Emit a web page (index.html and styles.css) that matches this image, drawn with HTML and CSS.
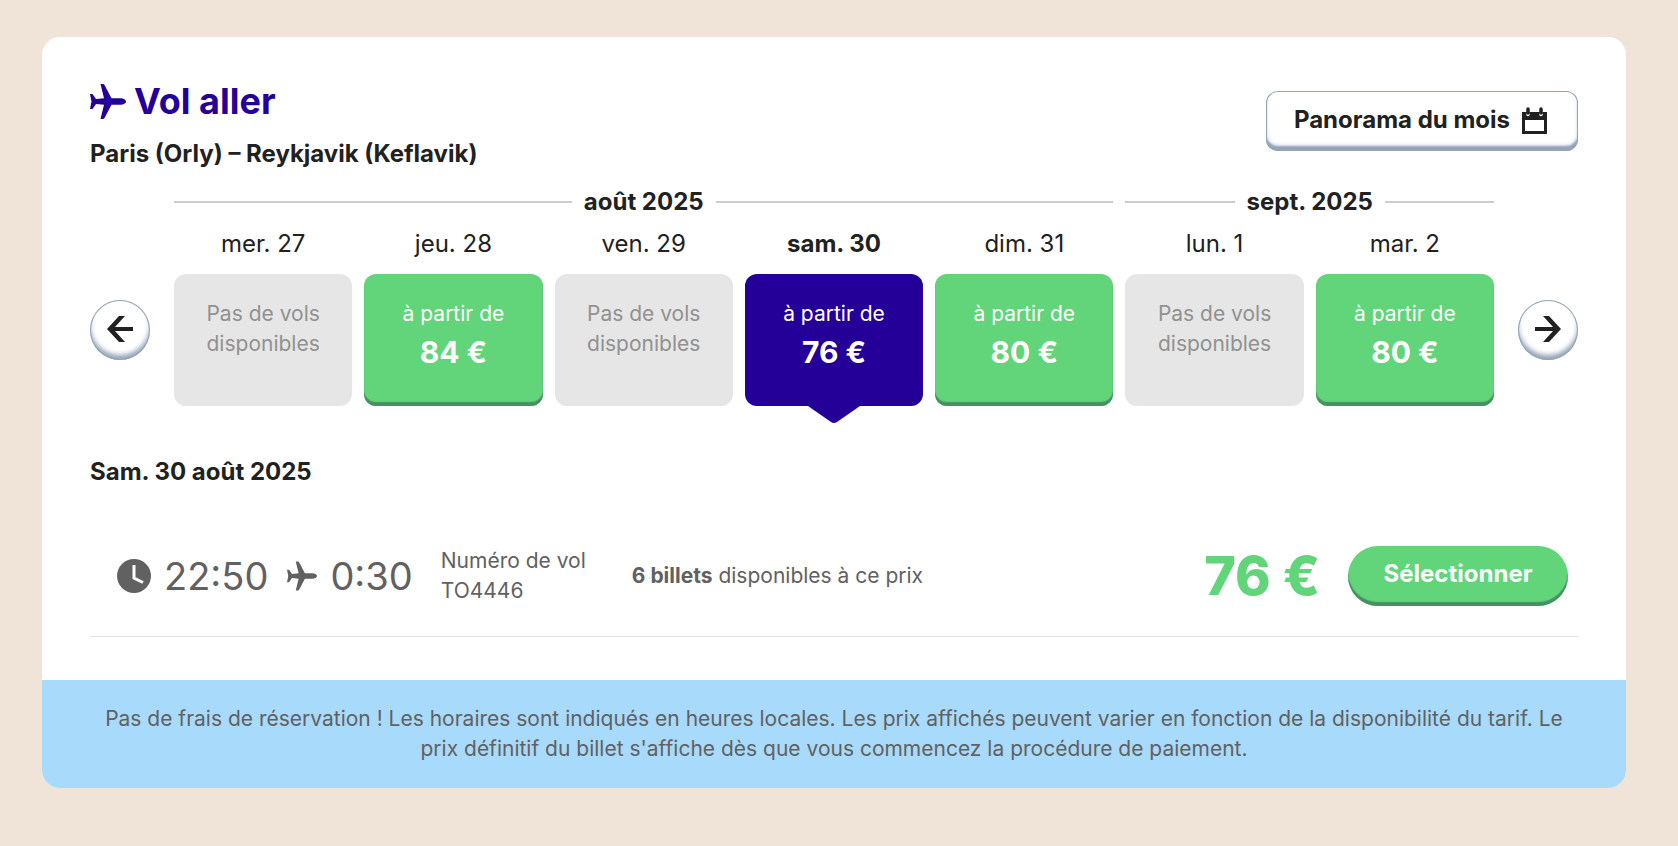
FILE: index.html
```
<!DOCTYPE html>
<html lang="fr">

<head>
  <meta charset="utf-8">
  <title>Vol aller</title>
  <link rel="stylesheet" href="styles.css">
</head>

<body>
  <svg class="sprite" aria-hidden="true">
    <symbol id="plane" viewBox="0 0 36 35">
      <path d="M10.500 0H13q1 0 1.500 1l7 13.200h8.500c3.500 0 6 1.500 6 3.300s-2.500 3.300-6 3.300h-8.500L14.500 34q-.5 1-1.500 1h-2.500l3.500-14.300-8-.7-3.500 5H0l1.500-7.500L0 10h2.500L6 15l8-.7z"/>
    </symbol>
  </svg>

  <main class="card">
    <div class="content">
      <header class="header">
        <div>
          <h1 class="title"><svg class="title-icon"><use href="#plane"/></svg>Vol aller</h1>
          <h2 class="subtitle">Paris (Orly) – Reykjavik (Keflavik)</h2>
        </div>
        <button type="button" class="month-button">
          Panorama du mois
          <svg class="calendar-icon" viewBox="0 0 25 27">
            <path d="M0 5h25v22H0zM3 13v11h19V13z" fill-rule="evenodd"/>
            <path d="M6 7v.500M19 7v.500" stroke="#fff" stroke-width="3.500" stroke-linecap="round"/>
            <path d="M6 2v4M19 2v4" stroke="#212121" stroke-width="3.500" stroke-linecap="round"/>
          </svg>
        </button>
      </header>

      <section class="picker">
        <button type="button" class="arrow" aria-label="Jours précédents">
          <svg class="arrow-icon" viewBox="0 0 26 26"><path d="M26 11v4H8l10 11h-6L0 13 12 0h6L8 11z"/></svg>
        </button>
        <div class="calendar">
          <div class="month month-first">août 2025</div>
          <div class="month month-second">sept. 2025</div>

          <div class="day">mer. 27</div>
          <div class="day">jeu. 28</div>
          <div class="day">ven. 29</div>
          <div class="day day-current">sam. 30</div>
          <div class="day">dim. 31</div>
          <div class="day">lun. 1</div>
          <div class="day">mar. 2</div>

          <button type="button" class="fare fare-none" disabled>Pas de vols disponibles</button>
          <button type="button" class="fare">à partir de <strong class="fare-price">84 €</strong></button>
          <button type="button" class="fare fare-none" disabled>Pas de vols disponibles</button>
          <button type="button" class="fare fare-selected">à partir de <strong class="fare-price">76 €</strong>
            <svg class="pointer" viewBox="0 0 52 17"><path d="M0 0h52L29 16q-3 2-6 0z"/></svg>
          </button>
          <button type="button" class="fare">à partir de <strong class="fare-price">80 €</strong></button>
          <button type="button" class="fare fare-none" disabled>Pas de vols disponibles</button>
          <button type="button" class="fare">à partir de <strong class="fare-price">80 €</strong></button>
        </div>
        <button type="button" class="arrow" aria-label="Jours suivants">
          <svg class="arrow-icon" viewBox="0 0 26 26"><path d="M0 11v4h18L8 26h6l12-13L14 0H8l10 11z"/></svg>
        </button>
      </section>

      <h3 class="date">Sam. 30 août 2025</h3>

      <section class="flight">
        <div class="times">
          <svg class="clock-icon" viewBox="0 0 34 34">
            <circle cx="17" cy="17" r="17"/>
            <path d="M17 6v13l9 4.500" fill="none" stroke="#fff" stroke-width="3"/>
          </svg>
          <span>22:50</span>
          <svg class="flight-icon"><use href="#plane"/></svg>
          <span>0:30</span>
        </div>
        <div class="number">Numéro de vol<br>TO4446</div>
        <div class="tickets"><strong>6 billets</strong> disponibles à ce prix</div>
        <div class="price">76 €</div>
        <button type="button" class="select-button">Sélectionner</button>
      </section>
    </div>

    <footer class="notice">Pas de frais de réservation ! Les horaires sont indiqués en heures locales. Les prix affichés peuvent varier en fonction de la disponibilité du tarif. Le prix définitif du billet s'affiche dès que vous commencez la procédure de paiement.</footer>
  </main>
</body>

</html>
```

FILE: styles.css
```
* {
  box-sizing: border-box;
}

body {
  margin: 0;
  padding: 37px 52px 56px 42px;
  background-color: #f0e4d9;
  color: #212121;
  font-family: Inter, "Open Sans", sans-serif;
  font-size: 21px;
  line-height: 30px;
}

h1, h2, h3 {
  margin: 0;
}

button {
  border: none;
  padding: 0;
  background: none;
  color: inherit;
  font: inherit;
  cursor: pointer;
}

svg {
  display: block;
  flex: none;
  fill: currentColor;
}

.sprite {
  display: none;
}

.card {
  border-radius: 18px;
  background-color: #fff;
  overflow: hidden;
}

.content {
  padding: 43px 48px;
}

.header {
  display: flex;
  justify-content: space-between;
  align-items: flex-start;
  margin-bottom: 18px;
}

.title {
  display: flex;
  align-items: center;
  gap: 8px;
  margin-bottom: 17px;
  color: #240099;
  font-size: 36px;
  line-height: 42px;
}

.title-icon {
  width: 36px;
  height: 35px;
}

.subtitle, .date {
  font-size: 24px;
  line-height: 30px;
}

.month-button {
  display: flex;
  align-items: center;
  gap: 12px;
  height: 60px;
  margin-top: 11px;
  padding: 0 31px 2px 28px;
  border-radius: 12px;
  box-shadow: inset 0 0 0 1px #94a3b8, inset 0 -5px 2px #94a3b8, inset 0 -5px 5px #cbd5e1;
  font-size: 24px;
  font-weight: bold;
}

.calendar-icon {
  width: 25px;
  height: 27px;
}

.picker {
  display: flex;
  align-items: flex-end;
  gap: 24px;
}

.arrow {
  display: flex;
  flex: none;
  justify-content: center;
  align-items: center;
  width: 60px;
  height: 60px;
  margin-bottom: 46px;
  padding-bottom: 3px;
  border-radius: 50%;
  box-shadow: inset 0 0 0 1px #94a3b8, inset 0 -5px 5px #94a3b8;
}

.arrow-icon {
  width: 26px;
  height: 26px;
}

.calendar {
  display: grid;
  flex: 1;
  grid-template-columns: repeat(7, 1fr);
  column-gap: 12px;
}

.month {
  display: flex;
  align-items: center;
  gap: 12px;
  margin-bottom: 12px;
  font-size: 24px;
  font-weight: bold;
}

.month::before, .month::after {
  content: "";
  flex: 1;
  height: 2px;
  background-color: #ccc;
}

.month-first {
  grid-column: span 5;
}

.month-second {
  grid-column: span 2;
}

.day {
  margin-bottom: 15px;
  font-size: 24px;
  text-align: center;
}

.day-current {
  font-weight: bold;
}

.fare {
  display: flex;
  position: relative;
  flex-direction: column;
  align-items: center;
  height: 132px;
  padding: 25px 24px 0;
  border-radius: 12px;
  background-color: #62d479;
  box-shadow: inset 0 -4px 1px #479064;
  color: #fff;
}

.fare-none {
  background-color: #e6e6e6;
  box-shadow: none;
  color: #919191;
  cursor: default;
}

.fare-selected {
  background-color: #240099;
  box-shadow: none;
}

.fare-price {
  margin-top: 5px;
  font-size: 30px;
  line-height: 36px;
}

.pointer {
  position: absolute;
  top: 100%;
  left: 50%;
  width: 52px;
  height: 17px;
  margin-left: -26px;
  color: #240099;
}

.date {
  margin-top: 51px;
}

.flight {
  display: flex;
  align-items: center;
  margin-top: 29px;
  padding: 30px 10px 30px 27px;
  border-bottom: 1px solid #e2e2e2;
  color: #616161;
}

.times {
  display: flex;
  align-items: center;
  gap: 13px;
  font-size: 38px;
}

.clock-icon {
  width: 34px;
  height: 34px;
}

.flight-icon {
  width: 30px;
  height: 30px;
  margin-left: 6px;
}

.number {
  margin-left: 28px;
}

.tickets {
  margin-left: 46px;
}

.price {
  margin-left: auto;
  color: #62d479;
  font-size: 54px;
  font-weight: 800;
}

.select-button {
  width: 220px;
  height: 60px;
  margin-left: 28px;
  padding-bottom: 4px;
  border-radius: 30px;
  background-color: #62d479;
  box-shadow: inset 0 -4px 1px #479064;
  color: #fff;
  font-size: 24px;
  font-weight: bold;
}

.notice {
  padding: 24px 48px;
  background-color: #a8dafb;
  color: #616161;
  text-align: center;
}
```
